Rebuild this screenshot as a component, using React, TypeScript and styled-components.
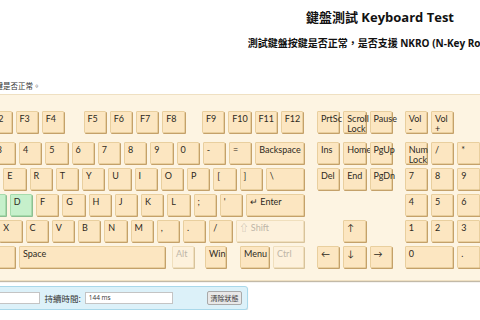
import React from 'react'
import styled, { createGlobalStyle, css } from 'styled-components'

const U = 26.25
const GAP = 4

const GlobalStyle = createGlobalStyle`
  html, body {
    margin: 0;
    background: #ffffff;
    overflow: hidden;
  }
  body {
    font-family: "Open Sans", "Noto Sans CJK TC", sans-serif;
    color: #222;
  }
`

// the page is wider than the window; the window shows a slice of it
const Page = styled.div`
  width: 952px;
  margin-left: -96px;
`

const Header = styled.header`
  padding-top: 8px;
  text-align: center;
`

const Title = styled.h1`
  margin: 0;
  font-size: 13px;
  line-height: 18px;
  font-weight: 700;
  color: #111;
`

const Subtitle = styled.p`
  margin: 10px 0 0;
  font-size: 10px;
  line-height: 14px;
  font-weight: 700;
  color: #111;
`

const Hint = styled.p`
  margin: 30px 0 0 9px;
  font-size: 7.5px;
  line-height: 12px;
  color: #333;
`

const Board = styled.div`
  margin-top: 2px;
  display: flex;
  gap: 13px;
  padding: 16px 9px 12px;
  background: #fdf4e2;
  border: 1px solid #efe0c2;
  box-shadow: 0 1px 1px rgba(120, 100, 60, 0.45);
`

const Section = styled.div`
  display: flex;
  flex-direction: column;
  gap: 9px;
`

const KeyRow = styled.div`
  display: flex;
  gap: ${GAP}px;
  height: 22px;
`

const Rows = styled.div`
  display: flex;
  flex-direction: column;
  gap: ${GAP}px;
`

const Pad = styled.div<{ $cols: number }>`
  display: grid;
  grid-template-columns: repeat(${({ $cols }) => $cols}, ${U - GAP}px);
  grid-template-rows: repeat(5, 22px);
  gap: ${GAP}px;
`

type KeyState = 'hit' | 'off'

const Key = styled.div<{
  $w?: number
  $px?: number
  $ml?: number
  $state?: KeyState
  $col?: string
  $row?: string
}>`
  box-sizing: border-box;
  flex: none;
  width: ${({ $w, $px }) =>
    $px !== undefined ? `${$px}px` : $w !== undefined ? `${$w * U - GAP}px` : 'auto'};
  margin-left: ${({ $ml }) => $ml ?? 0}px;
  grid-column: ${({ $col }) => $col ?? 'auto'};
  grid-row: ${({ $row }) => $row ?? 'auto'};
  padding: 2px 2px 0 3px;
  font-family: Lato, "Noto Sans CJK TC", sans-serif;
  font-size: 9px;
  line-height: 10px;
  white-space: pre;
  color: #2e2a22;
  background: #fce6c1;
  border: 1px solid #e9cf9e;
  border-radius: 1px;
  box-shadow: 1px 1px 0 #c4a16a;

  ${({ $state }) =>
    $state === 'hit' &&
    css`
      background: #c6f0cb;
      border-color: #a6dbac;
      box-shadow: 1px 1px 0 #8cbf92;
    `}

  ${({ $state }) =>
    $state === 'off' &&
    css`
      background: #fdf1dc;
      border-color: #f0dfbd;
      color: #bdb6a8;
      box-shadow: 1px 1px 0 #d8c39b;
    `}
`

type KeyDef = {
  label: string
  w?: number
  px?: number
  ml?: number
  state?: KeyState
  col?: string
  row?: string
}

const k = (label: string, extra: Partial<KeyDef> = {}): KeyDef => ({ label, w: 1, ...extra })
const g = (label: string, extra: Partial<KeyDef> = {}): KeyDef => ({ label, ...extra })

const fnRow: KeyDef[] = [
  k('Esc'),
  k('F1', { ml: 22.75 }),
  k('F2'),
  k('F3'),
  k('F4'),
  k('F5', { ml: 15.5 }),
  k('F6'),
  k('F7'),
  k('F8'),
  k('F9', { ml: 13.5 }),
  k('F10'),
  k('F11'),
  k('F12'),
]

const mainRows: KeyDef[][] = [
  [
    ...'`1234567890-='.split('').map((c) => k(c)),
    k('Backspace', { w: 2 }),
  ],
  [
    k('Tab', { w: 1.4 }),
    ...'QWERTYUIOP[]'.split('').map((c) => k(c, c === 'W' ? { state: 'hit' } : {})),
    k('\\', { w: 1.6 }),
  ],
  [
    k('Caps Lock', { w: 1.65 }),
    ...'ASDFGHJKL;\''.split('').map((c) =>
      k(c, c === 'A' || c === 'S' || c === 'D' ? { state: 'hit' } : {}),
    ),
    k('\u21b5 Enter', { w: 2.35 }),
  ],
  [
    k('\u21e7 Shift', { w: 2.25 }),
    ...'ZXCVBNM,./'.split('').map((c) => k(c)),
    k('\u21e7 Shift', { w: 2.75, state: 'off' }),
  ],
  [
    k('Ctrl', { w: 1.25 }),
    k('Win', { w: 1.25 }),
    k('Alt', { w: 1.5 }),
    k('Space', { w: 5.7 }),
    k('Alt', { px: 22, ml: 3.4, state: 'off' }),
    k('Win', { px: 21, ml: 7 }),
    k('Menu', { px: 29, ml: 10 }),
    k('Ctrl', { px: 31, state: 'off' }),
  ],
]

const navTop: KeyDef[] = [k('PrtSc'), k('Scroll\nLock'), k('Pause')]

const navKeys: KeyDef[] = [
  g('Ins'),
  g('Home'),
  g('PgUp'),
  g('Del'),
  g('End'),
  g('PgDn'),
  g('\u2191', { col: '2', row: '4' }),
  g('\u2190', { col: '1', row: '5' }),
  g('\u2193', { col: '2', row: '5' }),
  g('\u2192', { col: '3', row: '5' }),
]

const numTop: KeyDef[] = [k('Vol\n-'), k('Vol\n+')]

const numKeys: KeyDef[] = [
  g('Num\nLock'),
  g('/'),
  g('*'),
  g('-'),
  g('7'),
  g('8'),
  g('9'),
  g('+', { row: 'span 2' }),
  g('4'),
  g('5'),
  g('6'),
  g('1'),
  g('2'),
  g('3'),
  g('Enter', { row: 'span 2' }),
  g('0', { col: 'span 2' }),
  g('.'),
]

const renderKey = (d: KeyDef, i: number) => (
  <Key
    key={i}
    $w={d.w}
    $px={d.px}
    $ml={d.ml}
    $state={d.state}
    $col={d.col}
    $row={d.row}
  >
    {d.label}
  </Key>
)

const Panel = styled.div`
  box-sizing: border-box;
  margin-top: 5px;
  width: 344px;
  height: 24px;
  display: flex;
  align-items: center;
  gap: 4px;
  padding: 0 5px;
  background: #dcf1f9;
  border: 1px solid #a9d8ea;
  border-radius: 3px;
  box-shadow: 0 1px 1px rgba(90, 140, 160, 0.3);
`

const Label = styled.span`
  font-family: "Noto Sans CJK TC", sans-serif;
  font-size: 8.5px;
  color: #333;
  white-space: nowrap;
`

const Field = styled.div<{ $w: number }>`
  box-sizing: border-box;
  width: ${({ $w }) => $w}px;
  height: 12px;
  padding-left: 3px;
  font-size: 6.5px;
  line-height: 10px;
  color: #333;
  background: #fff;
  border: 1px solid #c4c4c4;
`

const ClearButton = styled.button`
  box-sizing: border-box;
  margin-left: auto;
  width: 35px;
  height: 14px;
  padding: 0;
  font-family: "Noto Sans CJK TC", sans-serif;
  font-size: 7px;
  color: #333;
  background: #e8e8e8;
  border: 1px solid #a9a9a9;
  border-radius: 2px;
`

export default function App() {
  return (
    <>
      <GlobalStyle />
      <Page>
        <Header>
          <Title>鍵盤測試 Keyboard Test</Title>
          <Subtitle>測試鍵盤按鍵是否正常，是否支援 NKRO (N-Key Rollover)</Subtitle>
        </Header>
        <Hint>請按下任意按鍵，檢測按鍵是否正常。</Hint>
        <Board>
          <Section>
            <KeyRow>{fnRow.map(renderKey)}</KeyRow>
            <Rows>
              {mainRows.map((row, r) => (
                <KeyRow key={r}>{row.map(renderKey)}</KeyRow>
              ))}
            </Rows>
          </Section>
          <Section>
            <KeyRow>{navTop.map(renderKey)}</KeyRow>
            <Pad $cols={3}>{navKeys.map(renderKey)}</Pad>
          </Section>
          <Section>
            <KeyRow>{numTop.map(renderKey)}</KeyRow>
            <Pad $cols={4}>{numKeys.map(renderKey)}</Pad>
          </Section>
        </Board>
        <Panel>
          <Label>最後按鍵:</Label>
          <Field $w={90}>KeyD</Field>
          <Label>持續時間:</Label>
          <Field $w={88}>144 ms</Field>
          <ClearButton>清除狀態</ClearButton>
        </Panel>
      </Page>
    </>
  )
}
